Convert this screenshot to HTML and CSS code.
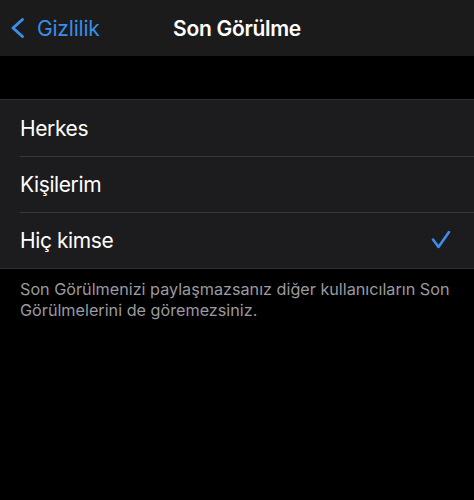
FILE: index.html
```html
<!DOCTYPE html>
<html lang="tr">
<head>
<meta charset="utf-8">
<title>Son Görülme</title>
<link rel="stylesheet" href="styles.css">
</head>
<body>
  <header class="navbar">
    <a class="back" href="#">
      <svg class="back-chevron" width="17" height="24" viewBox="0 0 17 24" aria-hidden="true">
        <path d="M14.5 3.5 L5 12 L14.5 20.5" fill="none" stroke="currentColor" stroke-width="3" stroke-linecap="round" stroke-linejoin="round"/>
      </svg>
      <span>Gizlilik</span>
    </a>
    <h1 class="title">Son Görülme</h1>
  </header>

  <main class="content">
    <ul class="group">
      <li class="row"><span class="label">Herkes</span></li>
      <li class="row"><span class="label">Kişilerim</span></li>
      <li class="row selected">
        <span class="label">Hiç kimse</span>
        <svg class="check" width="20" height="20" viewBox="0 0 20 20" aria-hidden="true">
          <path d="M2 9.5 L7.5 17 L18 2" fill="none" stroke="currentColor" stroke-width="2.6" stroke-linecap="round" stroke-linejoin="round"/>
        </svg>
      </li>
    </ul>
    <p class="footer-note">Son Görülmenizi paylaşmazsanız diğer kullanıcıların Son Görülmelerini de göremezsiniz.</p>
  </main>
</body>
</html>
```
FILE: styles.css
```css
html, body {
  margin: 0;
  padding: 0;
  background: #000;
}

body {
  width: 474px;
  min-height: 500px;
  font-family: Inter, "Noto Sans", sans-serif;
  color: #fff;
  -webkit-font-smoothing: antialiased;
}

/* top navigation bar */
.navbar {
  position: relative;
  height: 56px;
  background: #1b1b1c;
  display: flex;
  align-items: center;
  justify-content: center;
}

.back {
  position: absolute;
  left: 8px;
  top: 0;
  height: 56px;
  display: flex;
  align-items: center;
  gap: 12px;
  color: #3a8ee8;
  text-decoration: none;
  font-size: 21px;
  letter-spacing: -0.2px;
}

.back-chevron {
  display: block;
}

.title {
  margin: 0;
  font-size: 21px;
  font-weight: 600;
  letter-spacing: -0.3px;
}

/* grouped list */
.content {
  padding-top: 43px;
}

.group {
  list-style: none;
  margin: 0;
  padding: 0;
  background: #1c1c1e;
  border-top: 1px solid #2e2e30;
  border-bottom: 1px solid #2e2e30;
}

.row {
  position: relative;
  height: 56px;
  padding: 0 23px 0 20px;
  display: flex;
  align-items: center;
  justify-content: space-between;
  font-size: 21px;
  letter-spacing: -0.4px;
}

.row + .row::before {
  content: "";
  position: absolute;
  left: 20px;
  right: 0;
  top: 0;
  height: 1px;
  background: #38383a;
}

.check {
  color: #3a8ee8;
  display: block;
}

.footer-note {
  margin: 0;
  padding: 10px 20px 0;
  font-size: 16.2px;
  line-height: 21px;
  color: #9a9a9f;
  letter-spacing: 0;
}
```
